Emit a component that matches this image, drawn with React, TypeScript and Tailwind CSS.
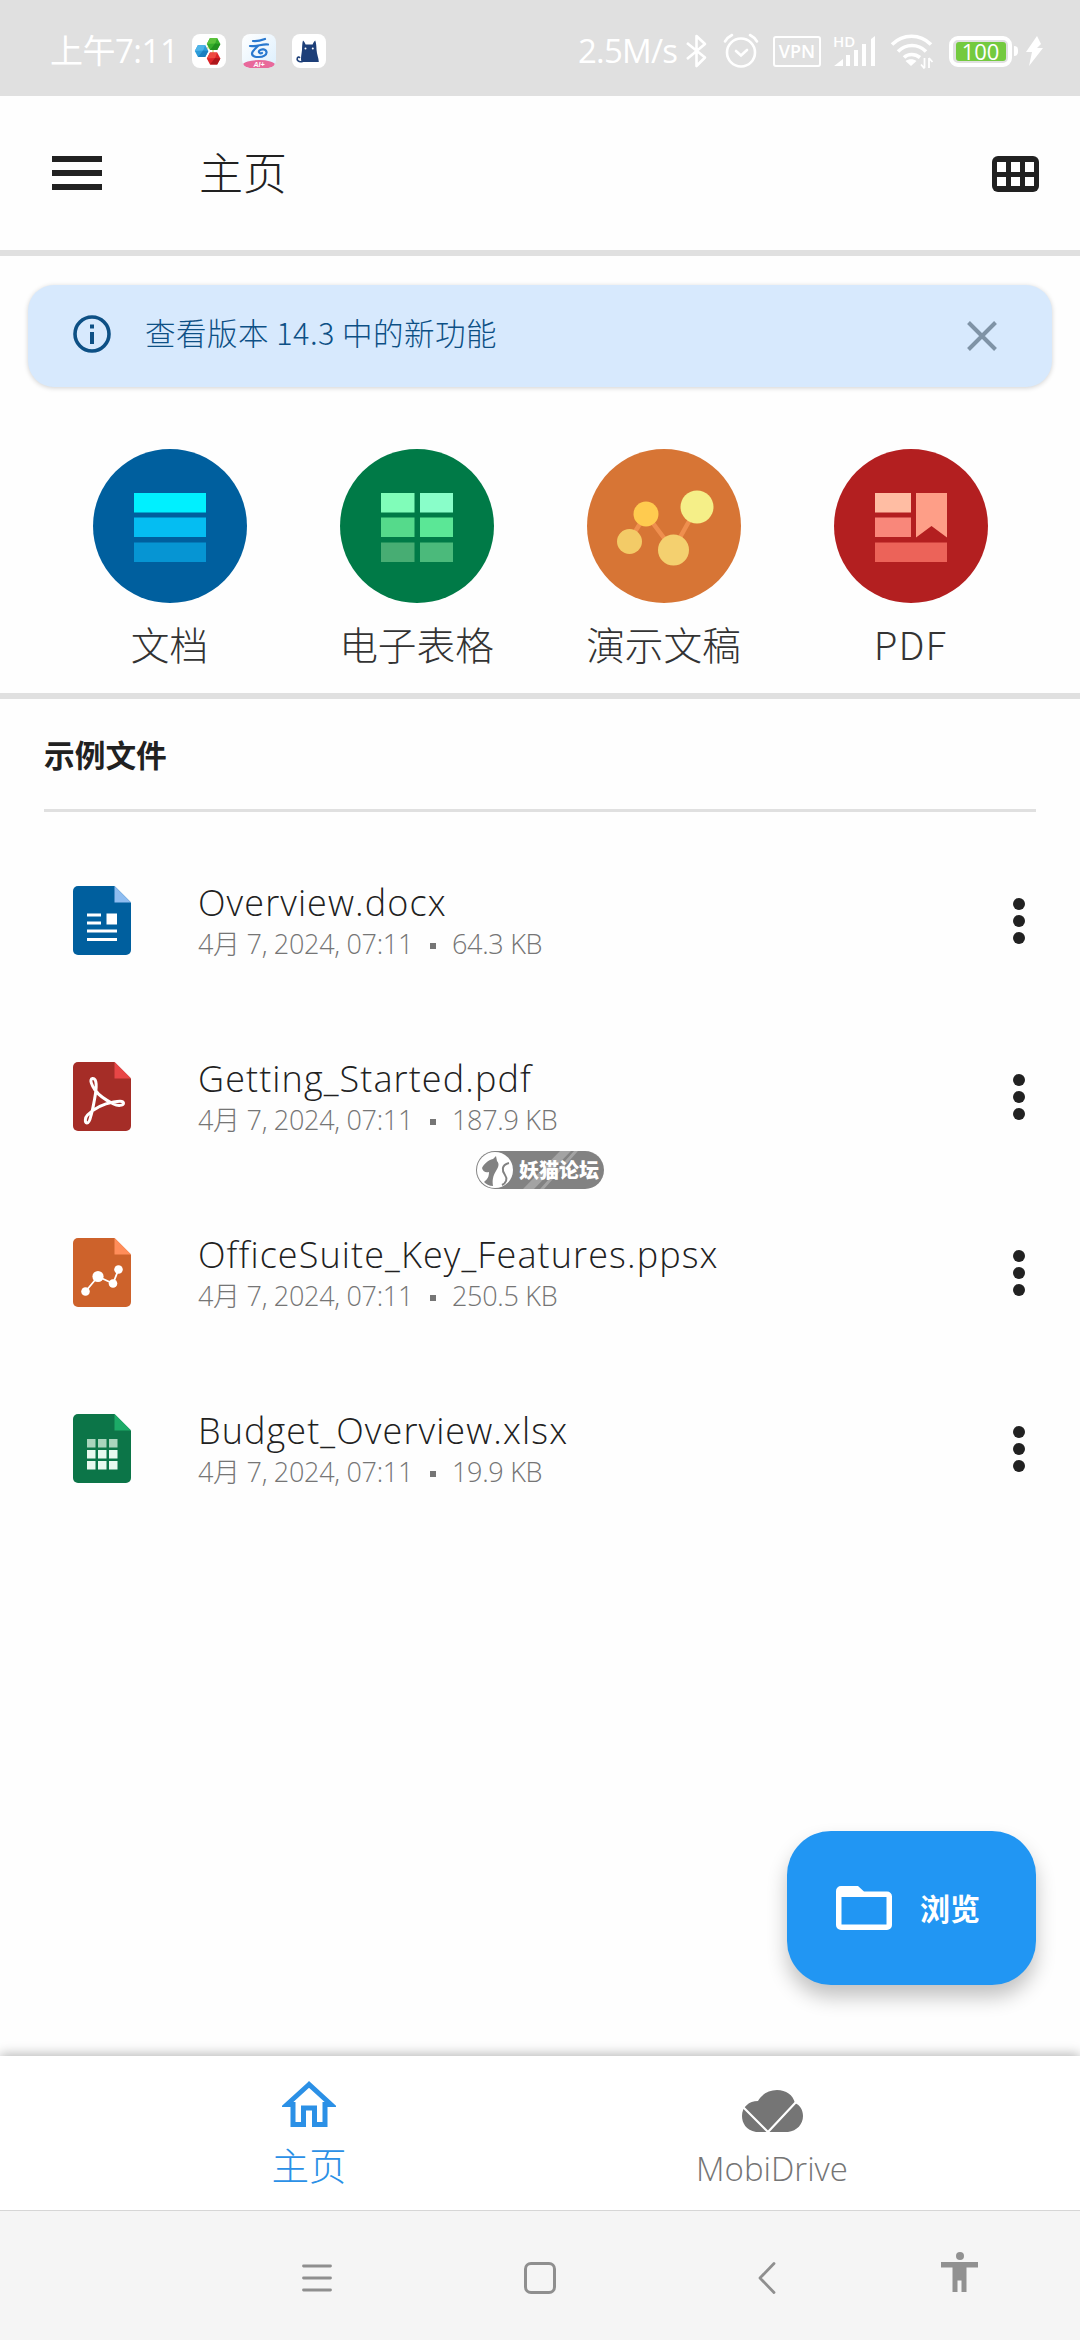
import React from 'react';

const CJK = "font-['Noto_Sans_CJK_SC',sans-serif]";
const LATIN = "font-['Open_Sans','Noto_Sans_CJK_SC',sans-serif]";

function Hexagon({ cx, cy, light, mid, dark }: { cx: number; cy: number; light: string; mid: string; dark: string }) {
  return (
    <g transform={`translate(${cx} ${cy})`}>
      <polygon points="-6.8,0 -3.6,-6 3.6,-6 6.8,0 3.6,6 -3.6,6" fill={mid} />
      <polygon points="-6.8,0 -3.6,-6 3.6,-6 1.5,-0.5" fill={light} />
      <polygon points="1.5,-0.5 6.8,0 3.6,6 -3.6,6" fill={dark} />
    </g>
  );
}

function StatusBar() {
  return (
    <div className={`flex h-[96px] shrink-0 items-center bg-[#e0e0e0] pl-[50px] pt-[6px] text-white ${LATIN}`}>
      <span className="w-[142px] whitespace-nowrap text-[33px] leading-[34px] tracking-[-0.500px]">上午7:11</span>
      <div className="flex gap-[16px]">
        <svg width="34" height="34" viewBox="0 0 34 34">
          <rect width="34" height="34" rx="8" fill="#fff" />
          <polyline points="10,17 21,11 21,24" fill="none" stroke="#e8e4a8" strokeWidth="2" />
          <Hexagon cx={9.6} cy={17} light="#4fb4e8" mid="#2b9bd9" dark="#1b7fc0" />
          <Hexagon cx={21.6} cy={10} light="#5cc23c" mid="#36ad2a" dark="#23911f" />
          <Hexagon cx={21.6} cy={24.4} light="#ee4a40" mid="#dc2327" dark="#ad161b" />
        </svg>
        <svg width="34" height="34" viewBox="0 0 34 34">
          <defs>
            <linearGradient id="cloudTile" x1="0" y1="0" x2="1" y2="1">
              <stop offset="0" stopColor="#ffffff" />
              <stop offset="1" stopColor="#dceffd" />
            </linearGradient>
            <clipPath id="cloudClip">
              <rect width="34" height="34" rx="8" />
            </clipPath>
          </defs>
          <g clipPath="url(#cloudClip)">
            <rect width="34" height="34" fill="url(#cloudTile)" />
            <ellipse cx="17" cy="30.500" rx="16" ry="4.400" fill="#e8699b" />
          </g>
          <path
            d="M11 7c4 .6 8-.6 12-2M8 12c6 1 13-2.500 18-1.500M16 12c-3 3-6 5-6 7.500 0 3 4 3.600 7 3.500 4 0 8-2 7.500-5-.5-3-5-3.500-7-1.500-1.500 1.800.5 3.500 2.500 2.500"
            fill="none"
            stroke="#2878cf"
            strokeWidth="2.200"
            strokeLinecap="round"
          />
          <text x="17" y="33.200" textAnchor="middle" fontSize="7" fontStyle="italic" fontWeight="700" fill="#fff" fontFamily="Liberation Sans">
            AI+
          </text>
        </svg>
        <svg width="34" height="34" viewBox="0 0 34 34">
          <rect width="34" height="34" rx="8" fill="#fff" />
          <path d="M11 6.500c1.500 1.200 2 2.700 2.600 4h7c.6-1.300 1.100-2.800 2.600-4 1 2.500 1.200 6 1.300 9 .3 5 2.200 8.500 2.300 12.500H9.500c-1.300-3.600.2-8 .5-12 .1-3 .2-7 1-9.500z" fill="#1d3f78" />
          <path d="M10.500 27.500c-4 1-6-1.500-5.200-3.500.5-1 1.800-1.200 2.300-.6" fill="none" stroke="#1d3f78" strokeWidth="1.600" strokeLinecap="round" />
          <circle cx="13.500" cy="14.500" r="1" fill="#fff" />
          <circle cx="20.800" cy="14.500" r="1" fill="#fff" />
        </svg>
      </div>
      <div className="ml-auto flex items-center pr-[36px]">
        <span className="w-[108px] whitespace-nowrap text-[33px] leading-[34px] tracking-[-0.800px]">2.5M/s</span>
        <svg width="22" height="34" viewBox="0 0 22 34" fill="none" stroke="#fff" strokeWidth="2.600" strokeLinejoin="round">
          <path d="M1 9l18 14.500-8.500 8.500V2L19 10 1 25" />
        </svg>
        <svg className="ml-[15px]" width="36" height="36" viewBox="0 0 36 36" fill="none" stroke="#fff" strokeWidth="2.600" strokeLinecap="round">
          <circle cx="18" cy="19.500" r="14" />
          <path d="M13 18l5 4.500 6-5.500M2 8.500C3.500 6 6 3.500 9 2M34 8.500C32.500 6 30 3.500 27 2" />
        </svg>
        <div className="ml-[14px] flex h-[31px] w-[48px] items-center justify-center rounded-[3px] border-2 border-white font-['Open_Sans',sans-serif] text-[18px] font-semibold leading-none">
          VPN
        </div>
        <svg className="-mt-[6px] ml-[12px]" width="44" height="40" viewBox="0 -6 44 40" fill="#fff">
          <text x="0" y="12.500" fontSize="15" fontWeight="600" fontFamily="Open Sans">
            HD
          </text>
          <path d="M1 32l9-7v7zM13 21h4v11h-4zM21 16h4v16h-4zM29 10h4v22h-4zM38 5l4-3v30h-4z" />
        </svg>
        <svg className="ml-[13px]" width="44" height="36" viewBox="0 0 44 36" fill="none" stroke="#fff" strokeWidth="3.600">
          <path d="M2 11.500c11-11 28-11 39 0M8 18.500c8-8 20-8 28 0M14 24.500c4-4 11-4 16 0" />
          <path d="M15.500 28c3-2.500 8-2.500 11 0L21 33z" fill="#fff" stroke="none" />
          <path d="M34.500 25v10M31 31.500l3.500 4M39 35V25M42.500 29L39 25" strokeWidth="1.800" />
        </svg>
        <div className="ml-[15px] flex h-[31px] w-[63px] items-center justify-center rounded-[9px] border-[4px] border-white">
          <span className="flex h-[19px] w-[50px] items-center justify-center rounded-[3px] bg-[#74ca3f] text-[22px] leading-none">100</span>
        </div>
        <div className="ml-[2px] h-[10px] w-[4px] rounded-r-sm bg-white" />
        <svg className="ml-[7px]" width="19" height="32" viewBox="0 0 19 32" fill="#fff">
          <path d="M12 1L1 17h6L4 31l14-18h-6l4-4z" />
        </svg>
      </div>
    </div>
  );
}

function Header() {
  return (
    <header className="flex h-[160px] shrink-0 items-center border-b-[6px] border-[#e0e0e0] pl-[52px] pr-[41px]">
      <div className="flex w-[50px] flex-col gap-[8px]">
        <div className="h-[6px] bg-[#212121]" />
        <div className="h-[6px] bg-[#212121]" />
        <div className="h-[6px] bg-[#212121]" />
      </div>
      <h1 className={`mb-[4px] ml-[97px] text-[44px] font-light leading-[44px] text-[#212121] ${CJK}`}>主页</h1>
      <div className="ml-auto mt-[2px] grid h-[36px] w-[47px] grid-cols-3 gap-[5px] rounded-[6px] bg-[#212121] px-[5px] py-[6px]">
        {[0, 1, 2, 3, 4, 5].map((i) => (
          <div key={i} className="bg-white" />
        ))}
      </div>
    </header>
  );
}

function Banner() {
  return (
    <div className="mx-[28px] mt-[29px] flex h-[102px] shrink-0 items-center rounded-[26px] bg-[#d7e9fd] pl-[45px] pr-[55px] shadow-[0_1px_5px_rgba(0,0,0,0.18)]">
      <svg className="mb-[5px]" width="38" height="38" viewBox="0 0 38 38" fill="none" stroke="#0d5085" strokeWidth="3.600">
        <circle cx="19" cy="19" r="17" />
        <path d="M19 17v12M19 9.500v4" strokeWidth="4" />
      </svg>
      <span className={`mb-[9px] ml-[34px] whitespace-nowrap text-[30.500px] font-light leading-[36px] tracking-[0.500px] text-[#0d5085] ${CJK}`}>
        查看版本 14.3 中的新功能
      </span>
      <svg className="ml-auto" width="30" height="30" viewBox="0 0 30 30" stroke="#7f93a6" strokeWidth="4">
        <path d="M1.500 1.500l27 27M28.500 1.500l-27 27" />
      </svg>
    </div>
  );
}

const CREATE_ITEMS = [
  {
    label: '文档',
    icon: (
      <svg viewBox="0 0 154 154">
        <circle cx="77" cy="77" r="77" fill="#005f9e" />
        <rect x="41" y="44" width="72" height="19.500" fill="#00f0ff" />
        <rect x="41" y="68.500" width="72" height="19.500" fill="#05bdf2" />
        <rect x="41" y="93.500" width="72" height="19.500" fill="#0695d3" />
      </svg>
    ),
  },
  {
    label: '电子表格',
    icon: (
      <svg viewBox="0 0 154 154">
        <circle cx="77" cy="77" r="77" fill="#007a47" />
        <rect x="41" y="44" width="33.500" height="19.500" fill="#80fdb9" />
        <rect x="80" y="44" width="33" height="19.500" fill="#89fec9" />
        <rect x="41" y="68.500" width="33.500" height="19.500" fill="#55da8b" />
        <rect x="80" y="68.500" width="33" height="19.500" fill="#5be796" />
        <rect x="41" y="93.500" width="33.500" height="19.500" fill="#47ad73" />
        <rect x="80" y="93.500" width="33" height="19.500" fill="#4bba7b" />
      </svg>
    ),
  },
  {
    label: '演示文稿',
    icon: (
      <svg viewBox="0 0 154 154">
        <circle cx="77" cy="77" r="77" fill="#d77535" />
        <path d="M42 92.500L59 65l27 36 24-43" fill="none" stroke="#ef8f4e" strokeWidth="4.500" />
        <circle cx="42.500" cy="92.500" r="12.500" fill="#f3cb67" />
        <circle cx="59" cy="65" r="12.500" fill="#ffcb4f" />
        <circle cx="86.500" cy="101" r="15.500" fill="#f4d06f" />
        <circle cx="110" cy="58" r="16.500" fill="#f5ef88" />
      </svg>
    ),
  },
  {
    label: 'PDF',
    icon: (
      <svg viewBox="0 0 154 154">
        <circle cx="77" cy="77" r="77" fill="#b31f20" />
        <rect x="41" y="44" width="36" height="19.500" fill="#ffbda3" />
        <rect x="41" y="68.500" width="36" height="19.500" fill="#f9877a" />
        <path d="M82 44h31v44.500L97.500 77 82 88.500z" fill="#fe9e87" />
        <rect x="41" y="93.500" width="72" height="19.500" fill="#ec6359" />
      </svg>
    ),
  },
];

function CreateRow() {
  return (
    <div className="mt-[62px] grid h-[250px] shrink-0 grid-cols-4 border-b-[6px] border-[#e0e0e0] px-[46px]">
      {CREATE_ITEMS.map((item) => (
        <div key={item.label} className="flex flex-col items-center">
          <div className="h-[154px] w-[154px]">{item.icon}</div>
          <span className={`mt-[20px] whitespace-nowrap text-[38.700px] font-light leading-[40px] text-[#333] ${item.label === 'PDF' ? 'tracking-[1px]' : ''} ${CJK}`}>
            {item.label}
          </span>
        </div>
      ))}
    </div>
  );
}

function FileShape({ body, fold, children }: { body: string; fold: string; children: React.ReactNode }) {
  return (
    <svg className="-mt-px" width="58" height="69" viewBox="0 0 58 69">
      <path d="M5 0h36.500L58 16.500V64a5 5 0 0 1-5 5H5a5 5 0 0 1-5-5V5a5 5 0 0 1 5-5z" fill={body} />
      <path d="M41.500 0L58 16.500H41.500z" fill={fold} />
      {children}
    </svg>
  );
}

const FILES = [
  {
    name: 'Overview.docx',
    size: '64.3 KB',
    icon: (
      <FileShape body="#005f9e" fold="#8ebcf0">
        <path d="M14 27.500h14v3H14zM14 35.500h14v3H14zM14 43.500h30v3H14zM14 52h30v3H14zM33.500 27.500h10.500v11H33.500z" fill="#fff" />
      </FileShape>
    ),
  },
  {
    name: 'Getting_Started.pdf',
    size: '187.9 KB',
    icon: (
      <FileShape body="#a52d27" fold="#e84646">
        <path
          d="M22 28c-3-4-6-11-2.500-11.500 4.500-.5 4.500 8 2 21-1.200 6-1.600 10-3.500 16-1 4.500-2 7.500-4 7.500-2.500-.5-2-5.500.5-8 6-6 15-11 26-13 5-1 9.500-1.500 10 1 .2 3-6 3-10 1-8-4-14.500-8.500-18.500-14z"
          fill="none"
          stroke="#fff"
          strokeWidth="3"
          strokeLinejoin="round"
        />
      </FileShape>
    ),
  },
  {
    name: 'OfficeSuite_Key_Features.ppsx',
    size: '250.5 KB',
    icon: (
      <FileShape body="#cd622b" fold="#ff8d5a">
        <path d="M12.500 53.500L25 38.500l15 7 5.500-14" fill="none" stroke="#fff" strokeWidth="1.800" />
        <g fill="#fff">
          <circle cx="12.500" cy="53.500" r="4.300" />
          <circle cx="25" cy="38.500" r="5.600" />
          <circle cx="40" cy="45.500" r="4.300" />
          <circle cx="45.500" cy="31.500" r="4.300" />
        </g>
      </FileShape>
    ),
  },
  {
    name: 'Budget_Overview.xlsx',
    size: '19.9 KB',
    icon: (
      <FileShape body="#0c7548" fold="#1cab67">
        <path d="M14 25h8.500v8.500H14zM25 25h8.500v8.500H25zM36 25h8.500v8.500H36z" fill="#a9d5bd" />
        <path
          d="M14 36h8.500v8.500H14zM25 36h8.500v8.500H25zM36 36h8.500v8.500H36zM14 47h8.500v8.500H14zM25 47h8.500v8.500H25zM36 47h8.500v8.500H36z"
          fill="#e9f9ef"
        />
      </FileShape>
    ),
  },
];

function FileRow({ file }: { file: (typeof FILES)[number] }) {
  return (
    <div className="flex h-[176px] items-center pl-[73px] pr-[55px]">
      {file.icon}
      <div className={`ml-[67px] font-light ${LATIN}`}>
        <div className="whitespace-nowrap text-[36px] leading-[44px] tracking-[1.100px] text-[#212121]">{file.name}</div>
        <div className="flex items-center whitespace-nowrap pt-px text-[27px] leading-[36px] text-[#757575]">
          <span className="w-[232px] tracking-[-0.300px]">4月 7, 2024, 07:11</span>
          <span className="mt-[4px] h-[6px] w-[6px] bg-[#757575]" />
          <span className="ml-[16px] tracking-[-0.300px]">{file.size}</span>
        </div>
      </div>
      <div className="ml-auto flex flex-col gap-[5px]">
        <div className="h-[12px] w-[12px] rounded-full bg-[#212121]" />
        <div className="h-[12px] w-[12px] rounded-full bg-[#212121]" />
        <div className="h-[12px] w-[12px] rounded-full bg-[#212121]" />
      </div>
    </div>
  );
}

function Watermark() {
  return (
    <div className="absolute left-[476px] top-[1151px] flex h-[38px] w-[128px] items-center overflow-hidden rounded-full bg-[#828282] pl-[1px]">
      <svg width="126" height="38" viewBox="0 0 126 38" className="absolute left-0 top-0">
        <path d="M84 0h11L58 38H47zM98 0h4L68 38h-4z" fill="#a3a3a3" />
      </svg>
      <svg width="36" height="36" viewBox="0 0 36 36" className="relative">
        <circle cx="18" cy="18" r="18" fill="#fff" />
        <path d="M5 16c2-4 6-8 11-9l3-3 1 5c3 3 1 7-1 10-3 5-4 9-3 15-4 0-7-2-9-4 4-3 5-6 5-10-3 1-6 0-7-4z" fill="#828282" />
        <path d="M32 11c-8 2-7 8-4 12s1 8-3 10" fill="none" stroke="#828282" strokeWidth="2" />
      </svg>
      <span className={`relative ml-[6px] whitespace-nowrap text-[20px] font-black leading-[24px] text-white ${CJK}`}>妖猫论坛</span>
    </div>
  );
}

function BrowseButton() {
  return (
    <div className="mr-[44px] flex h-[154px] w-[249px] items-center self-end rounded-[44px] bg-[#2196f3] pl-[49px] shadow-[0_12px_20px_rgba(0,0,0,0.24)]">
      <svg width="56" height="44" viewBox="0 0 56 44">
        <path d="M5 0h17l6 5.500h23a5 5 0 0 1 5 5V39a5 5 0 0 1-5 5H5a5 5 0 0 1-5-5V5a5 5 0 0 1 5-5z" fill="#fff" />
        <rect x="5.500" y="11" width="45" height="27.500" fill="#2196f3" />
      </svg>
      <span className={`mb-[2px] ml-[28px] text-[30px] font-bold leading-[34px] text-white ${CJK}`}>浏览</span>
    </div>
  );
}

function BottomTabs() {
  return (
    <nav className="grid h-[154px] shrink-0 grid-cols-[618px_1fr] bg-white shadow-[0_-2px_11px_rgba(0,0,0,0.28)]">
      <div className="flex flex-col items-center pt-[25px] text-[#2b90e6]">
        <svg width="54" height="47" viewBox="0 0 54 47">
          <path d="M27 3.500L5 23.500h6V43.500h10.500V27h11v16.500H43V23.500h6z" fill="none" stroke="currentColor" strokeWidth="5" />
        </svg>
        <span className={`mt-[16px] text-[37.500px] font-light leading-[40px] ${CJK}`}>主页</span>
      </div>
      <div className="flex flex-col items-center pr-[154px] pt-[34px] text-[#757575]">
        <svg width="61" height="42" viewBox="0 0 61 42">
          <path d="M14 42C4 40 0 33 0 26c0-9 7-15 16-15C20 4 27 0 35 0c9 0 16 5 18 13 5 2 8 7 8 13 0 8-6 15-15 16z" fill="currentColor" />
          <path d="M1 17l25 25 29-31" fill="none" stroke="#fff" strokeWidth="2.200" />
        </svg>
        <span className={`mt-[17px] text-[33px] font-light leading-[40px] ${LATIN}`}>MobiDrive</span>
      </div>
    </nav>
  );
}

function SystemNav() {
  return (
    <div className="flex h-[130px] shrink-0 items-start border-t border-[#d6d6d6] bg-[#f5f5f5] pl-[302px]">
      <svg className="mt-[51px]" width="30" height="32" viewBox="0 0 30 32" stroke="#8f8f8f" strokeWidth="2.800" strokeLinecap="round">
        <path d="M1.500 4h27M1.500 16h27M1.500 28h27" />
      </svg>
      <div className="ml-[192px] mt-[51px] h-[32px] w-[32px] rounded-[7px] border-[3px] border-[#8f8f8f]" />
      <svg className="ml-[202px] mt-[51px]" width="18" height="32" viewBox="0 0 18 32" fill="none" stroke="#8f8f8f" strokeWidth="2.800" strokeLinecap="round" strokeLinejoin="round">
        <path d="M16 1.500L2 16l14 14.500" />
      </svg>
      <svg className="ml-[165px] mt-[41px]" width="37" height="41" viewBox="0 0 37 41" fill="#919191">
        <circle cx="19" cy="4" r="4" />
        <path d="M0 10h37v5.500H25.500V40h-5V28.500h-4V40h-5V15.500H0z" />
      </svg>
    </div>
  );
}

export default function App() {
  return (
    <div className="relative flex h-[2340px] w-[1080px] flex-col overflow-hidden bg-[#fefefe]">
      <StatusBar />
      <Header />
      <Banner />
      <CreateRow />
      <section className="flex flex-1 flex-col">
        <div className="mx-[44px] flex h-[113px] items-center border-b-[3px] border-[#e0e0e0]">
          <h2 className={`text-[30.700px] font-bold leading-[36px] text-[#212121] ${CJK}`}>示例文件</h2>
        </div>
        <div className="pt-[21px]">
          {FILES.map((file) => (
            <FileRow key={file.name} file={file} />
          ))}
        </div>
        <div className="mt-auto flex flex-col pb-[71px]">
          <BrowseButton />
        </div>
      </section>
      <BottomTabs />
      <SystemNav />
      <Watermark />
    </div>
  );
}
